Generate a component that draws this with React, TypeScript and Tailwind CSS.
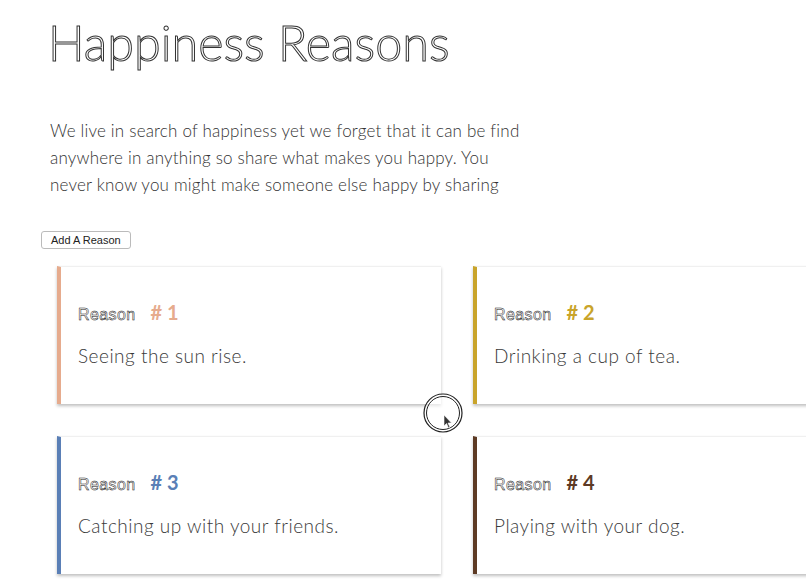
import { FC } from 'react';

interface Reason {
  id: number; // Number shown after "Reason"
  text: string; // Description of the reason
  color: string; // Accent colour for bar and number
}

const reasons: Reason[] = [
  { id: 1, text: 'Seeing the sun rise.', color: 'peach' },
  { id: 2, text: 'Drinking a cup of tea.', color: 'gold' },
  { id: 3, text: 'Catching up with your friends.', color: 'blue' },
  { id: 4, text: 'Playing with your dog.', color: 'brown' },
];

const accent: { [key: string]: { bar: string; num: string } } = {
  peach: { bar: 'border-l-[#e6ab8d]', num: 'text-[#e6ab8d]' },
  gold: { bar: 'border-l-[#c9a42a]', num: 'text-[#c9a42a]' },
  blue: { bar: 'border-l-[#5a7fb6]', num: 'text-[#5a7fb6]' },
  brown: { bar: 'border-l-[#5d3a24]', num: 'text-[#5d3a24]' },
};

const ReasonCard: FC<{ reason: Reason }> = ({ reason }) => (
  <div
    className={`h-[138px] w-[384px] shrink-0 border-t border-t-[#f0f0f0] border-l-4 ${accent[reason.color].bar} bg-white pl-[17px] pt-[30px] shadow-[0_2px_3px_rgba(0,0,0,0.25)]`}
  >
    <div className="flex items-baseline gap-[15px]">
      <span className="font-['Liberation_Sans',sans-serif] text-[16px] tracking-[0.4px] text-transparent [-webkit-text-stroke:0.5px_#111]">
        Reason
      </span>
      <span className={`font-['Lato',sans-serif] text-[20px] font-bold ${accent[reason.color].num}`}>
        # {reason.id}
      </span>
    </div>
    <p className="mt-[15px] font-['Lato',sans-serif] text-[19px] font-light tracking-[0.5px] text-[#3a3a3a]">
      {reason.text}
    </p>
  </div>
);

const App: FC = () => {
  return (
    <div className="relative h-[588px] w-[806px] overflow-hidden bg-white">
      <div className="pl-[48px] pt-[12px]">
        <h1 className="font-['Lato',sans-serif] text-[48.5px] font-light leading-[60px] text-transparent [-webkit-text-stroke:1px_#333]">
          Happiness Reasons
        </h1>
        <p className="mt-[45px] w-[478px] pl-[2px] font-['Lato',sans-serif] text-[17px] font-light leading-[27px] tracking-[0.2px] text-[#333]">
          We live in search of happiness yet we forget that it can be find anywhere in anything so share what makes
          you happy. You never know you might make someone else happy by sharing
        </p>
      </div>
      <div className="pl-[41px] pt-[28px]">
        <button className="h-[18px] rounded-[3px] border border-[#bbb] bg-white px-[9px] font-['Liberation_Sans',sans-serif] text-[11px] leading-[16px] text-[#222]">
          Add A Reason
        </button>
      </div>
      <div className="mt-[16px] grid w-[850px] grid-cols-[384px_384px] gap-x-[32px] gap-y-[32px] pl-[57px]">
        {reasons.map((r) => (
          <ReasonCard key={r.id} reason={r} />
        ))}
      </div>
      {/* mouse cursor overlay */}
      <svg className="absolute left-[422px] top-[392px]" width="44" height="44" viewBox="0 0 44 44">
        <circle cx="21" cy="21" r="19" fill="rgba(255,255,255,0.6)" stroke="#222" strokeWidth="1.2" />
        <circle cx="21" cy="21" r="16.5" fill="none" stroke="#222" strokeWidth="1" />
        <path d="M22 23 L22 34 L24.5 31.5 L26.5 36 L28 35.3 L26 31 L29.5 31 Z" fill="#333" stroke="#fff" strokeWidth="0.6" />
      </svg>
    </div>
  );
};

export default App;
